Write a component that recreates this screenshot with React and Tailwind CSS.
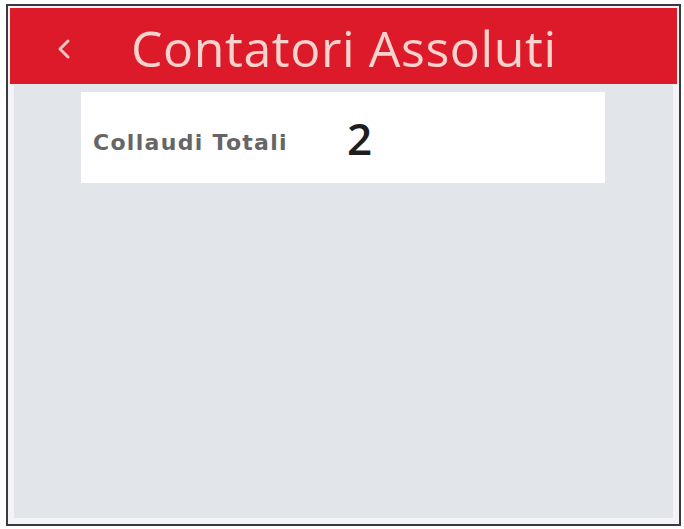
export default function App() {
  return (
    <div className="w-[684px] h-[529px] bg-white pt-[4px] pl-[6px]">
      <div
        className="w-[675px] h-[522px] border-2 border-[#3a3a3a] bg-[#f4f4f6] p-[2px] flex flex-col"
        style={{ fontFamily: '"Open Sans", "Liberation Sans", sans-serif' }}
      >
        {/* header */}
        <div className="h-[76px] bg-[#dd1a2a] flex items-center shrink-0">
          <svg className="ml-[46px] mt-[6px]" width="16" height="22" viewBox="0 0 16 22" fill="none">
            <path d="M12 3 L4 11 L12 19" stroke="#f3c6c0" strokeWidth="3" strokeLinecap="round" strokeLinejoin="round" />
          </svg>
          <h1 className="ml-[59px] mt-[4px] text-[50px] leading-none text-[#f6d3cc] tracking-[0.6px]">
            Contatori Assoluti
          </h1>
        </div>

        {/* body */}
        <div className="flex-1 bg-[#e2e5e9] mx-[4px] mb-[4px] pt-[8px]">
          <div className="ml-[67px] w-[524px] h-[91px] bg-white flex items-center">
            <span
              className="ml-[12px] mt-[10px] w-[254px] text-[22px] font-bold text-[#666666] tracking-[1.3px]"
              style={{ fontFamily: '"DejaVu Sans", sans-serif' }}
            >
              Collaudi Totali
            </span>
            <span className="text-[44px] leading-none font-semibold text-[#1e1e1e]">2</span>
          </div>
        </div>
      </div>
    </div>
  );
}
